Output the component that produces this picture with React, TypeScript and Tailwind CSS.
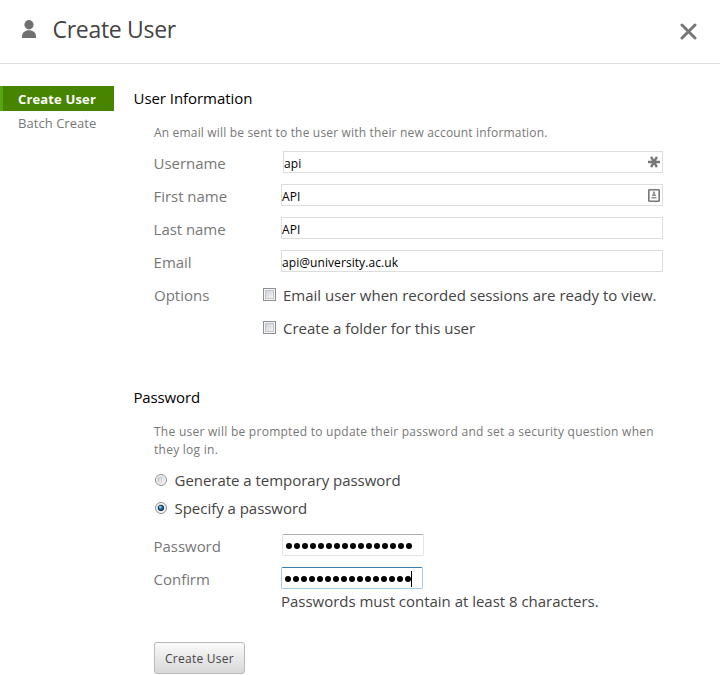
import type { ReactNode } from "react";

const fields = [
  { label: "Username", value: "api", icon: "star", margin: "ml-[2px]" },
  { label: "First name", value: "API", icon: "card", margin: "" },
  { label: "Last name", value: "API", icon: "", margin: "" },
  { label: "Email", value: "api@university.ac.uk", icon: "", margin: "" },
];

function StarIcon() {
  return (
    <svg className="size-3" viewBox="0 0 12 12" stroke="#777" strokeWidth="2.4">
      <path d="M0 6h12M3.1 .8l5.8 10.4M8.9 .8L3.1 11.2" />
    </svg>
  );
}

function CardIcon() {
  return (
    <svg className="h-[13px] w-3" viewBox="0 0 12 13" fill="#777">
      <path fillRule="evenodd" d="M1 0h10l1 1v11l-1 1H1l-1-1V1zM1.6 1.6v9.8h8.8V1.6z" />
      <path d="M5 2.5h2V5l1 1v1H4V6l1-1zM3.5 8h5v1.5h-5z" opacity=".8" />
    </svg>
  );
}

function Label({ children }: { children: ReactNode }) {
  return <span className="-ml-[0.4px] w-[127.4px] shrink-0 text-[15px] tracking-[-0.05px] text-[#777]">{children}</span>;
}

function Checkbox({ children }: { children: ReactNode }) {
  return (
    <label className="flex h-[33px] items-center text-[15px] text-[#444]">
      <span className="mr-[7px] mb-[2px] size-[13px] border border-[#8e8f8f] bg-[#f4f4f4] p-px">
        <span className="block size-[9px] border border-[#c3c6cc] bg-linear-to-br from-[#cdd1d8] to-[#f4f4f4]" />
      </span>
      {children}
    </label>
  );
}

function Radio({ checked, children }: { checked?: boolean; children: ReactNode }) {
  return (
    <label className="flex h-7 items-center text-[15px] tracking-[-0.03px] text-[#444]">
      <svg className="mr-[7.5px] mb-px ml-px size-3" viewBox="0 0 12 12">
        <defs>
          <linearGradient id="ring" x2="1" y2="1">
            <stop stopColor="#c0c4ca" />
            <stop offset="1" stopColor="#f6f6f6" />
          </linearGradient>
        </defs>
        <circle cx="6" cy="6" r="5.5" fill="#f4f4f4" stroke="#8e8f8f" />
        <circle cx="6" cy="6" r="3.8" fill="url(#ring)" />
        {checked && <circle cx="6" cy="6" r="2.7" fill="#1b6a9c" stroke="#16334a" />}
        {checked && <circle cx="5.3" cy="5.1" r="1.3" fill="#7cc8e8" />}
      </svg>
      {children}
    </label>
  );
}

function Dots() {
  return (
    <span className="flex gap-[2px]">
      {Array.from({ length: 16 }, (_, i) => (
        <i key={i} className="size-[6px] rounded-full bg-black" />
      ))}
    </span>
  );
}

export default function App() {
  return (
    <div className="h-[675px] w-[720px] overflow-hidden bg-white font-['Open_Sans','Noto_Sans',sans-serif] whitespace-nowrap">
      <header className="flex h-16 items-start border-b border-[#ddd] pl-[22px]">
        <svg className="mt-5 h-[18px] w-[14px]" viewBox="0 0 14 18" fill="#707070">
          <ellipse cx="7" cy="4.7" rx="4.6" ry="4.7" />
          <path d="M0 18v-1.5C0 12.5 3 10.2 7 10.2s7 2.3 7 6.3V18z" />
        </svg>
        <h1 className="ml-[16.5px] pt-[12px] text-[23px] leading-[34px] tracking-[-0.3px] text-[#444]">Create User</h1>
        <svg className="mt-[23px] mr-[23px] ml-auto size-[17px]" viewBox="0 0 17 17" stroke="#777" strokeWidth="3" strokeLinecap="round">
          <path d="M2 2l13 13M15 2L2 15" />
        </svg>
      </header>
      <div className="flex">
        <nav className="w-[114px] pt-[22px] text-[13px]">
          <div className="flex h-[25px] items-center border-l-[3px] border-[#55a510] bg-[#478400] pt-[2px] pl-[15px] font-bold tracking-[0.15px] text-white">Create User</div>
          <div className="flex h-[25px] items-center pl-[18px] tracking-[0.05px] text-[#777]">Batch Create</div>
        </nav>
        <main className="pl-5">
          <h2 className="-ml-[0.5px] pt-[23px] text-[15px] leading-[22px] tracking-[-0.05px] text-black">User Information</h2>
          <div className="pl-5">
            <p className="mt-[15px] mb-[5px] text-[12px] leading-[18px] tracking-[0.175px] text-[#777]">An email will be sent to the user with their new account information.</p>
            {fields.map((f) => (
              <div key={f.label} className="flex h-[33px] w-[509px] items-center">
                <Label>{f.label}</Label>
                <div className={`mb-[3px] flex h-[22px] min-w-0 flex-1 items-center justify-between border border-[#ddd] pr-[2px] text-[12px] tracking-[0.07px] text-black ${f.margin}`}>
                  <span className="pt-[3px]">{f.value}</span>
                  {f.icon === "star" && <StarIcon />}
                  {f.icon === "card" && <CardIcon />}
                </div>
              </div>
            ))}
            <div className="flex">
              <span className="flex h-[33px] w-[109px] items-center text-[15px] text-[#777]">Options</span>
              <div>
                <Checkbox>Email user when recorded sessions are ready to view.</Checkbox>
                <Checkbox>Create a folder for this user</Checkbox>
              </div>
            </div>
          </div>
          <h2 className="mt-[41px] -ml-[0.5px] text-[15px] leading-[22px] tracking-[-0.15px] text-black">Password</h2>
          <div className="pl-5">
            <p className="mt-[15px] mb-[7px] text-[12px] leading-[18px] tracking-[0.265px] text-[#777]">
              The user will be prompted to update their password and set a security question when
              <br />
              they log in.
            </p>
            <Radio>Generate a temporary password</Radio>
            <Radio checked>Specify a password</Radio>
            <div className="mt-2 flex h-[33px] items-center">
              <Label>Password</Label>
              <div className="mb-[3px] ml-px flex h-[22px] w-[142px] items-center rounded-[2px] border border-[#e2e3ea] border-t-[#abadb3] pt-[2px] pl-[3px]">
                <Dots />
              </div>
            </div>
            <div className="flex h-[33px] items-center">
              <Label>Confirm</Label>
              <div className="mb-[3px] flex h-[22px] w-[142px] items-center rounded-[2px] border border-[#a4cbe3] border-t-[#3d7bad] pt-[2px] pl-[3px]">
                <Dots />
                <span className="h-4 w-px bg-black" />
              </div>
            </div>
            <p className="-mt-[6px] ml-[127px] text-[15px] leading-[22px] tracking-[-0.02px] text-[#444]">Passwords must contain at least 8 characters.</p>
            <button className="mt-[30px] h-8 w-[91px] rounded-[3px] border border-[#bbb] bg-linear-to-b from-[#fafafa] to-[#d8d8d8] pt-px text-[12px] tracking-[0.25px] text-[#444]">Create User</button>
          </div>
        </main>
      </div>
    </div>
  );
}
